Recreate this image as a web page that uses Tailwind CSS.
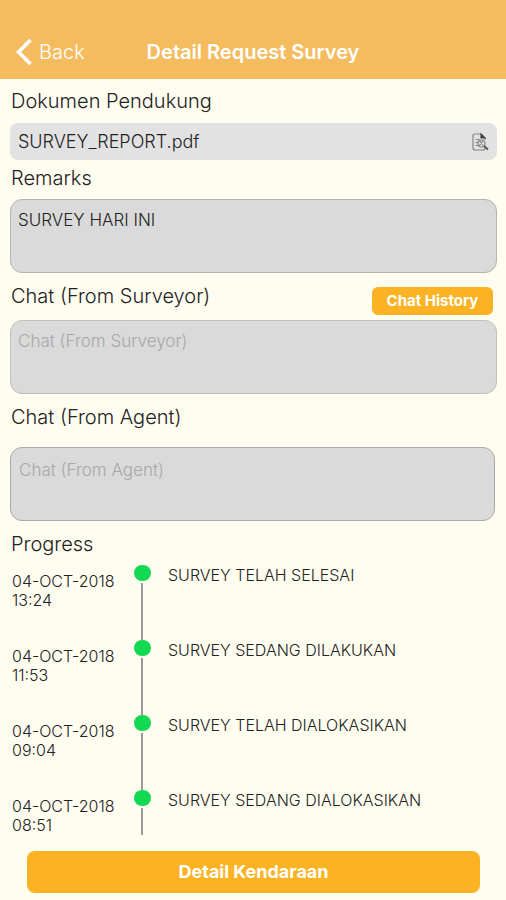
<!DOCTYPE html>
<html lang="id">
<head>
    <meta charset="UTF-8">
    <meta name="viewport" content="width=device-width, initial-scale=1.0">
    <script src="https://cdn.jsdelivr.net/npm/@tailwindcss/browser@4"></script>
    <title>Detail Request Survey</title>
</head>
<body class="bg-[#fffdf0] font-['Inter',sans-serif] font-light text-[#222]">
    <header class="grid grid-cols-[1fr_auto_1fr] items-center bg-[#f5bb5f] px-4 pt-6 h-[79px] text-white">
        <a href="#" class="flex items-center gap-[7px] text-xl font-light">
            <svg class="w-4 h-7" viewBox="0 0 16 28" fill="none" stroke="currentColor" stroke-width="3.6"><path d="M14.5 2 2.5 14l12 12"/></svg>
            Back
        </a>
        <h1 class="text-xl font-semibold">Detail Request Survey</h1>
    </header>
    <main class="pl-[10px] pr-[9px]">
        <h2 class="h-11 pt-2 pl-px text-xl">Dokumen Pendukung</h2>
        <div class="flex items-center justify-between h-[37px] rounded-lg bg-[#e2e2e2] px-2 text-lg">
            <span>SURVEY_REPORT.pdf</span>
            <button type="button" aria-label="Lihat dokumen">
                <svg class="w-[18px] h-[18px]" viewBox="0 0 18 18" fill="none" stroke="#858585" stroke-width="1.2">
                    <path d="M14 14.500V15q0 2-2 2H4q-2 0-2-2V3q0-2 2-2h6l4 4v2M4.500 6.500h4M4.500 9.500h3M4.500 12.500h3M8 6.500l4 6M12 8l-4 5"/>
                    <path d="M10 1v4h4z" fill="#333" stroke="#444"/>
                    <circle cx="10.500" cy="10.500" r="3.500"/>
                    <path d="m13 13 4 3.500" stroke="#555" stroke-width="1.800"/>
                </svg>
            </button>
        </div>
        <label for="remarks" class="block h-[39px] pt-1 pl-px text-xl">Remarks</label>
        <textarea id="remarks" class="block w-full h-[74px] resize-none rounded-xl border border-[#b5b5b0] bg-[#dadada] px-[7px] py-2 text-[17px] leading-6">SURVEY HARI INI</textarea>
        <div class="flex justify-between h-[47px] pl-px pr-1">
            <label for="surveyor" class="pt-[9px] text-xl">Chat (From Surveyor)</label>
            <button type="button" class="mt-[14px] h-7 w-[121px] rounded-md bg-[#fbb324] text-[15px] font-bold text-white">Chat History</button>
        </div>
        <textarea id="surveyor" placeholder="Chat (From Surveyor)" class="block w-full h-[74px] resize-none rounded-xl border border-[#c2c2ba] bg-[#dadada] px-[7px] py-2 text-[17px] leading-6 placeholder:text-[#a8a8a8]"></textarea>
        <label for="agent" class="block h-[53px] pt-[9px] pl-px text-xl">Chat (From Agent)</label>
        <div class="pr-[2px]">
            <textarea id="agent" placeholder="Chat (From Agent)" class="block w-full h-[74px] resize-none rounded-xl border border-[#a9a9a9] bg-[#dadada] px-2 py-[10px] text-[17px] leading-6 placeholder:text-[#a8a8a8]"></textarea>
        </div>
        <h2 class="h-11 pt-[9px] pl-px text-xl">Progress</h2>
        <ol class="text-base leading-[19px]">
            <li class="flex h-[75px]">
                <time class="w-[123px] pt-[7px] pl-[2px]">04-OCT-2018<br>13:24</time>
                <div class="flex flex-col items-center w-[18px]"><span class="h-4 w-[17px] shrink-0 rounded-full bg-[#12d951]"></span><span class="mt-[2px] w-[2px] grow bg-[#999]"></span></div>
                <p class="pl-[17px] pt-px">SURVEY TELAH SELESAI</p>
            </li>
            <li class="flex h-[75px]">
                <time class="w-[123px] pt-[7px] pl-[2px]">04-OCT-2018<br>11:53</time>
                <div class="flex flex-col items-center w-[18px]"><span class="h-4 w-[17px] shrink-0 rounded-full bg-[#12d951]"></span><span class="mt-[2px] w-[2px] grow bg-[#999]"></span></div>
                <p class="pl-[17px] pt-px">SURVEY SEDANG DILAKUKAN</p>
            </li>
            <li class="flex h-[75px]">
                <time class="w-[123px] pt-[7px] pl-[2px]">04-OCT-2018<br>09:04</time>
                <div class="flex flex-col items-center w-[18px]"><span class="h-4 w-[17px] shrink-0 rounded-full bg-[#12d951]"></span><span class="mt-[2px] w-[2px] grow bg-[#999]"></span></div>
                <p class="pl-[17px] pt-px">SURVEY TELAH DIALOKASIKAN</p>
            </li>
            <li class="flex h-[45px]">
                <time class="w-[123px] pt-[7px] pl-[2px]">04-OCT-2018<br>08:51</time>
                <div class="flex flex-col items-center w-[18px]"><span class="h-4 w-[17px] shrink-0 rounded-full bg-[#12d951]"></span><span class="mt-[2px] w-[2px] grow bg-[#999]"></span></div>
                <p class="pl-[17px] pt-px">SURVEY SEDANG DIALOKASIKAN</p>
            </li>
        </ol>
        <div class="pt-4 pb-[7px] px-[17px]">
            <button type="button" class="w-full h-[42px] rounded-lg bg-[#fbb324] text-lg font-bold text-white">Detail Kendaraan</button>
        </div>
    </main>
</body>
</html>
